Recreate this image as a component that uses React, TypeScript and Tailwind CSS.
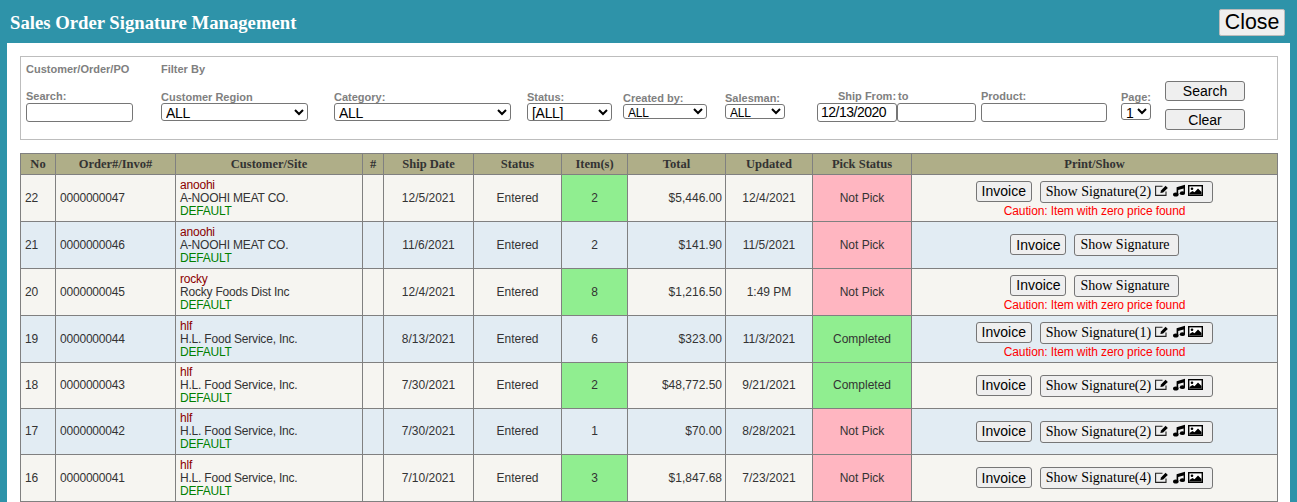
type Row = {
  no: number;
  order: string;
  code: string;
  name: string;
  date: string;
  items: number;
  total: string;
  updated: string;
  pick: string;
  sigs?: number;
  caution?: boolean;
};

const rows: Row[] = [
  { no: 22, order: '0000000047', code: 'anoohi', name: 'A-NOOHI MEAT CO.', date: '12/5/2021', items: 2, total: '$5,446.00', updated: '12/4/2021', pick: 'Not Pick', sigs: 2, caution: true },
  { no: 21, order: '0000000046', code: 'anoohi', name: 'A-NOOHI MEAT CO.', date: '11/6/2021', items: 2, total: '$141.90', updated: '11/5/2021', pick: 'Not Pick' },
  { no: 20, order: '0000000045', code: 'rocky', name: 'Rocky Foods Dist Inc', date: '12/4/2021', items: 8, total: '$1,216.50', updated: '1:49 PM', pick: 'Not Pick', caution: true },
  { no: 19, order: '0000000044', code: 'hlf', name: 'H.L. Food Service, Inc.', date: '8/13/2021', items: 6, total: '$323.00', updated: '11/3/2021', pick: 'Completed', sigs: 1, caution: true },
  { no: 18, order: '0000000043', code: 'hlf', name: 'H.L. Food Service, Inc.', date: '7/30/2021', items: 2, total: '$48,772.50', updated: '9/21/2021', pick: 'Completed', sigs: 2 },
  { no: 17, order: '0000000042', code: 'hlf', name: 'H.L. Food Service, Inc.', date: '7/30/2021', items: 1, total: '$70.00', updated: '8/28/2021', pick: 'Not Pick', sigs: 2 },
  { no: 16, order: '0000000041', code: 'hlf', name: 'H.L. Food Service, Inc.', date: '7/10/2021', items: 3, total: '$1,847.68', updated: '7/23/2021', pick: 'Not Pick', sigs: 4 },
];

const headers = [
  ['No', 'w-[35px]'],
  ['Order#/Invo#', 'w-[120px]'],
  ['Customer/Site', 'w-[187px]'],
  ['#', 'w-[21px]'],
  ['Ship Date', 'w-[90px]'],
  ['Status', 'w-[88px]'],
  ['Item(s)', 'w-[66px]'],
  ['Total', 'w-[98px]'],
  ['Updated', 'w-[87px]'],
  ['Pick Status', 'w-[99px]'],
  ['Print/Show', ''],
];

const label = 'block text-[11px] font-bold leading-[13px] text-[#808080] whitespace-nowrap';
const field = 'block border border-[#767676] rounded-[3px] bg-white text-black';
const bigSelect = 'text-[14px] leading-none tracking-[-0.3px]';
const smallSelect = 'text-[12px] leading-none tracking-[-0.2px]';
const cell = 'border border-[#808080] px-[3px] text-[12px] leading-[13px] text-[#333]';
const leftCell = 'border border-[#808080] px-[4px] text-[12px] leading-[13px] tracking-[-0.2px] text-[#333]';

function Filter({ title, className, children }: { title: string; className?: string; children: React.ReactNode }) {
  return (
    <div className={className}>
      <span className={label}>{title}</span>
      {children}
    </div>
  );
}

function EditIcon() {
  return (
    <svg viewBox="0 0 14 11" className="h-[11px] w-[14px]">
      <path d="M11 6.5 V10.4 H0.6 V1.2 H7.5" fill="none" stroke="#222" strokeWidth="1.1" />
      <path d="M6 5.4 L10.6 0.8 L12.8 2.9 L8.2 7.5 L5.4 8 Z" fill="#000" />
    </svg>
  );
}

function MusicIcon() {
  return (
    <svg viewBox="0 0 12 12" className="h-[13px] w-[12px]">
      <path d="M3.6 9.5 V2.8 L12 0.3 V8.6 H10.6 V4 L5.2 5.5 V9.8 Z" fill="#000" />
      <ellipse cx="2.8" cy="10" rx="2.8" ry="2" fill="#000" />
      <ellipse cx="9.4" cy="8.7" rx="2.6" ry="1.9" fill="#000" />
    </svg>
  );
}

function PictureIcon() {
  return (
    <svg viewBox="0 0 15 11" className="h-[11px] w-[15px]">
      <rect x="0.7" y="0.7" width="13.6" height="9.6" fill="#fff" stroke="#000" strokeWidth="1.4" />
      <circle cx="4" cy="3.8" r="1.3" fill="#000" />
      <path d="M1.5 9.5 V8 L4.5 6 L6.5 7.2 L10 3.5 L13.5 7 V9.5 Z" fill="#000" />
    </svg>
  );
}

export default function App() {
  return (
    <div className="h-[502px] overflow-hidden bg-[#2e93a9] px-[7px] font-['Liberation_Sans',sans-serif]">
      <div className="flex h-[43px] items-start justify-between">
        <h1 className="pl-[3px] pt-[12px] font-['Liberation_Serif',serif] text-[18.7px] font-bold leading-[22px] text-white">
          Sales Order Signature Management
        </h1>
        <button className="mr-[5px] mt-[9px] h-[27px] w-[66px] rounded-[2px] border border-[#bbb] bg-[#efefef] pt-[1px] text-[21.33px] leading-none text-black">
          Close
        </button>
      </div>

      <div className="h-[470px] bg-white px-[13px] pt-[13px]">
        <div className="h-[84px] w-[1258px] border border-[#bdbdbd] pl-[5px]">
          <div className="flex h-[19px] items-end text-[11px] font-bold leading-[13px] text-[#808080]">
            <span className="w-[135px]">Customer/Order/PO</span>
            <span>Filter By</span>
          </div>
          <div className="flex items-start">
            <div className="w-[135px] pt-[14px]">
              <Filter title="Search:">
                <input className={`${field} h-[19px] w-[107px]`} />
              </Filter>
            </div>
            <Filter title="Customer Region" className="w-[173px] pt-[15px]">
              <select className={`${field} -mt-[1px] h-[18px] w-[147px] ${bigSelect}`}>
                <option>ALL</option>
              </select>
            </Filter>
            <Filter title="Category:" className="w-[193px] pt-[15px]">
              <select className={`${field} -mt-[1px] h-[18px] w-[177px] ${bigSelect}`}>
                <option>ALL</option>
              </select>
            </Filter>
            <Filter title="Status:" className="w-[96px] pt-[15px]">
              <select className={`${field} -mt-[1px] h-[18px] w-[85px] ${bigSelect}`}>
                <option>[ALL]</option>
              </select>
            </Filter>
            <Filter title="Created by:" className="w-[102px] pt-[16px]">
              <select className={`${field} -mt-[1px] h-[15px] w-[84px] ${smallSelect}`}>
                <option>ALL</option>
              </select>
            </Filter>
            <Filter title="Salesman:" className="w-[92px] pt-[16px]">
              <select className={`${field} -mt-[1px] h-[15px] w-[60px] ${smallSelect}`}>
                <option>ALL</option>
              </select>
            </Filter>
            <div className="w-[164px] pt-[14px]">
              <span className={`${label} pl-[21px]`}>
                Ship From:<span className="ml-[2px]">to</span>
              </span>
              <div className="flex">
                <input className={`${field} h-[19px] w-[80px] px-[3px] text-[14px] tracking-[-0.5px]`} defaultValue="12/13/2020" />
                <input className={`${field} h-[19px] w-[79px]`} />
              </div>
            </div>
            <Filter title="Product:" className="w-[140px] pt-[14px]">
              <input className={`${field} h-[19px] w-[126px]`} />
            </Filter>
            <Filter title="Page:" className="w-[44px] pt-[15px]">
              <select className={`${field} -mt-[1px] h-[17px] w-[30px] ${bigSelect}`}>
                <option>1</option>
              </select>
            </Filter>
            <div className="mt-[5px] flex flex-col gap-[8px]">
              <button className="h-[20px] w-[80px] rounded-[3px] border border-[#767676] bg-[#efefef] text-[14px] leading-none text-black">
                Search
              </button>
              <button className="h-[21px] w-[80px] rounded-[3px] border border-[#767676] bg-[#efefef] text-[14px] leading-none text-black">
                Clear
              </button>
            </div>
          </div>
        </div>

        <table className="mt-[13px] w-[1258px] table-fixed border-collapse">
          <thead>
            <tr className="h-[21px] bg-[#afae88]">
              {headers.map(([h, w]) => (
                <th key={h} className={`${w} border border-[#808080] p-0 font-['Liberation_Serif',serif] text-[12.5px] font-bold text-[#333]`}>
                  {h}
                </th>
              ))}
            </tr>
          </thead>
          <tbody>
            {rows.map((r, i) => (
              <tr key={r.no} className={`${i === 4 || i === 5 ? 'h-[46px]' : 'h-[47px]'} ${i % 2 === 0 ? 'bg-[#f6f5f1]' : 'bg-[#e2ecf3]'}`}>
                <td className={leftCell}>{r.no}</td>
                <td className={leftCell}>{r.order}</td>
                <td className={leftCell}>
                  <div className="text-[#8b0000]">{r.code}</div>
                  <div>{r.name}</div>
                  <div className="text-[#008000]">DEFAULT</div>
                </td>
                <td className={cell}></td>
                <td className={`${cell} text-center`}>{r.date}</td>
                <td className={`${cell} text-center`}>Entered</td>
                <td className={`${cell} text-center ${i % 2 === 0 ? 'bg-[#90ee90]' : ''}`}>{r.items}</td>
                <td className={`${cell} text-right`}>{r.total}</td>
                <td className={`${cell} text-center`}>{r.updated}</td>
                <td className={`${cell} text-center ${r.pick === 'Completed' ? 'bg-[#90ee90]' : 'bg-[#ffb6c1]'}`}>{r.pick}</td>
                <td className={`${cell} text-center ${r.caution ? 'pt-[2px]' : ''}`}>
                  <div className="flex items-start justify-center gap-[8px]">
                    <button className="h-[21px] w-[56px] rounded-[3px] border border-[#767676] bg-[#efefef] text-[14px] leading-none text-black">
                      Invoice
                    </button>
                    <button className={`flex h-[22px] items-center rounded-[3px] border border-[#767676] bg-[#efefef] pl-[5px] font-['Liberation_Serif',serif] text-[14px] leading-none text-black ${r.sigs ? 'pr-[9px]' : 'pr-[8px]'}`}>
                      <span>Show Signature{r.sigs ? `(${r.sigs})` : ''}</span>
                      {r.sigs ? (
                        <span className="mb-[2px] ml-[4px] flex items-center">
                          <EditIcon />
                          <span className="ml-[4px] mr-[3px]">
                            <MusicIcon />
                          </span>
                          <PictureIcon />
                        </span>
                      ) : null}
                    </button>
                  </div>
                  {r.caution ? <div className="mt-[2px] text-[12px] leading-[13px] tracking-[-0.11px] text-[#ff0000]">Caution: Item with zero price found</div> : null}
                </td>
              </tr>
            ))}
          </tbody>
        </table>
      </div>
    </div>
  );
}
